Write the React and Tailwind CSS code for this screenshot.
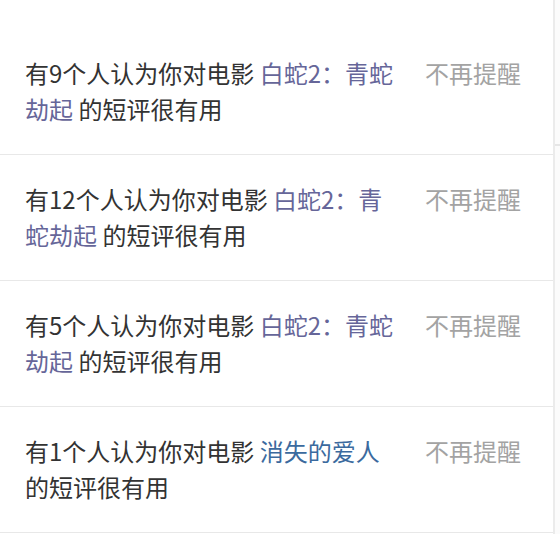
import React from "react";

const notices = [
  { count: 9, title: "白蛇2：青蛇劫起", visited: true },
  { count: 12, title: "白蛇2：青蛇劫起", visited: true },
  { count: 5, title: "白蛇2：青蛇劫起", visited: true },
  { count: 1, title: "消失的爱人", visited: false },
];

function NoticeRow({ notice }) {
  return (
    <div className="flex items-start border-b border-[#e8e8e8] pl-[25px] pr-[32px] pt-[26px] pb-[27px]">
      <p className="w-[375px] text-[24px] leading-[36px] text-[#333333]">
        有{notice.count}个人认为你对电影{" "}
        <a
          href="#"
          className={notice.visited ? "text-[#666699]" : "text-[#3b6a9e]"}
        >
          {notice.title}
        </a>{" "}
        的短评很有用
      </p>
      <button className="ml-auto text-[24px] leading-[36px] text-[#a3a3a3]">
        不再提醒
      </button>
    </div>
  );
}

export default function App() {
  return (
    <div
      className="flex h-[534px] w-[560px] overflow-hidden bg-white"
      style={{ fontFamily: '"Noto Sans CJK SC", "Noto Sans", sans-serif' }}
    >
      <div className="w-[555px] shrink-0 border-r-2 border-[#ebebeb] pt-[29px]">
        {notices.map((notice, i) => (
          <NoticeRow key={i} notice={notice} />
        ))}
      </div>
      <div className="flex-1 bg-[#fbfbfb] pt-[144px]">
        <div className="h-[2px] w-full bg-[#e6e6e6]" />
      </div>
    </div>
  );
}
